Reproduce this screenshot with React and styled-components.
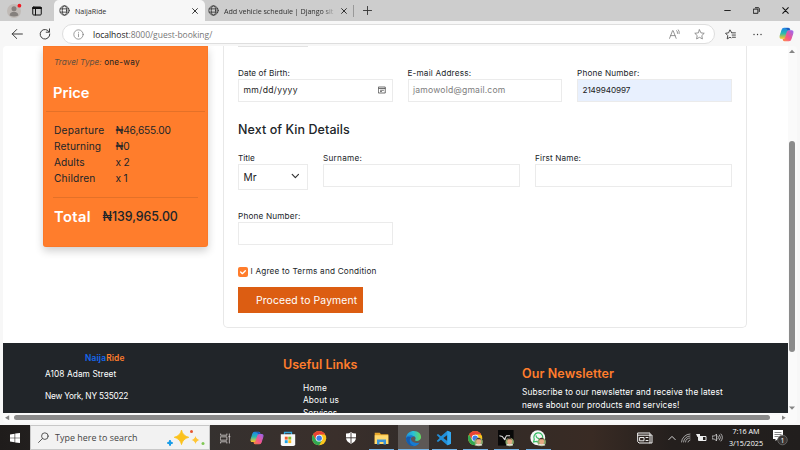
import React from "react";
import styled, { createGlobalStyle, css } from "styled-components";

const Global = createGlobalStyle`
  * { box-sizing: border-box; }
  body { margin: 0; background: #f7f7f7; }
  p, h2, h3, ul { margin: 0; padding: 0; font-weight: inherit; }
  svg { display: block; flex: none; }
`;

const siteFont = css`font-family: "Inter", "Noto Sans", sans-serif;`;
const systemFont = css`font-family: "Open Sans", "Noto Sans", sans-serif;`;

const Screen = styled.div`
  width: 800px;
  height: 450px;
  overflow: hidden;
  display: grid;
  grid-template-rows: 21px 25px 379px 25px;
  background: #f7f7f7;
  white-space: nowrap;
  ${systemFont}
`;

/* ---------- browser chrome ---------- */
const TabStrip = styled.div`
  display: flex;
  align-items: center;
  background: #cdcdcd;
`;
const ProfileArea = styled.div`
  width: 54px;
  height: 21px;
  display: flex;
  align-items: center;
  gap: 9px;
  padding-left: 6px;
`;
const Tab = styled.div`
  width: ${(p) => p.$width}px;
  height: 21px;
  padding: 0 ${(p) => p.$end}px 0 ${(p) => p.$start}px;
  display: flex;
  align-items: center;
  gap: 5px;
  border-radius: 5px 5px 0 0;
  background: ${(p) => (p.$active ? "#f7f7f7" : "transparent")};
  color: #303030;
  font-size: 7.2px;
`;
const TabTitle = styled.span`
  flex: 1;
  letter-spacing: ${(p) => p.$track || 0}px;
  mask-image: ${(p) => (p.$fade ? "linear-gradient(90deg, #000 88%, transparent)" : "none")};
`;
const TabDivider = styled.div`
  width: 1px;
  height: 12px;
  background: #999;
  margin-right: 9px;
`;
const WindowButtons = styled.div`
  margin-left: auto;
  display: flex;
  gap: 22px;
  padding-right: 11px;
`;
const Toolbar = styled.div`
  display: flex;
  align-items: center;
  padding: 1px 6px 0 11px;
`;
const NavIcons = styled.div`
  display: flex;
  gap: 16px;
  width: 51px;
`;
const AddressBar = styled.div`
  width: 653px;
  height: 20px;
  border: 1px solid #dedede;
  border-radius: 10px;
  background: #fff;
  display: flex;
  align-items: center;
  padding: 0 9px 0 10px;
  color: #777;
  font-size: 8.5px;
`;
const Url = styled.span`
  margin-left: 9px;
  flex: 1;
  letter-spacing: -0.02px;
  b { font-weight: 400; color: #202020; }
`;
const AddressIcons = styled.div`
  display: flex;
  align-items: center;
  gap: 14px;
`;
const ToolbarEnd = styled.div`
  margin-left: auto;
  display: flex;
  align-items: center;
  gap: 17px;
`;

/* ---------- viewport ---------- */
const Viewport = styled.div`
  width: 794px;
  height: 377px;
  margin-left: 3px;
  display: grid;
  grid-template: 366.5px 10.5px / 785px 9px;
  background: #fafafa;
  border-radius: 4px;
  overflow: hidden;
`;
const Page = styled.main`
  background: #fff;
  overflow: hidden;
  display: grid;
  grid-template-rows: 297px 69.5px;
  color: #212529;
  ${siteFont}
`;
const Booking = styled.div`
  display: flex;
  align-items: flex-start;
  padding-left: 40px;
  gap: 15px;
`;
const PriceCard = styled.aside`
  width: 165px;
  height: 200.5px;
  padding: 8px 3px 0;
  border-radius: 0 0 3px 3px;
  background: #ff7d2c;
  box-shadow: 0 4px 8px rgba(0, 0, 0, 0.19), inset 0 0 0 1px rgba(225, 92, 15, 0.12);
`;
const Text = styled.p`
  font-size: ${(p) => p.$size}px;
  line-height: ${(p) => p.$line || 12}px;
  letter-spacing: ${(p) => p.$track || 0}px;
  font-weight: ${(p) => p.$weight || 400};
  color: ${(p) => p.$color || "inherit"};
  padding-left: ${(p) => p.$indent || 0}px;
  margin-top: ${(p) => p.$above || 0}px;
`;
const TripLine = styled(Text)`
  color: #222;
  i { color: #65503f; letter-spacing: 0; }
`;
const Rule = styled.div`
  height: 1px;
  margin: ${(p) => p.$margin};
  background: #e47128;
`;
const PriceGrid = styled.div`
  display: grid;
  grid-template-columns: 61.5px 1fr;
  grid-auto-rows: 16.2px;
  align-items: center;
  padding-left: 8px;
  margin-top: 9.5px;
`;
const TotalRow = styled.div`
  display: flex;
  align-items: center;
  padding-left: 8px;
  margin-top: 10px;
  gap: 11.5px;
`;

const FormPanel = styled.section`
  width: 524px;
  height: 282px;
  padding: 0 14px;
  border: 1px solid #e8e8e8;
  border-top: 0;
  border-radius: 0 0 5px 5px;
`;
const PriorField = styled.div`
  width: 70px;
  height: 1px;
  background: #e3e3e3;
`;
const FieldRow = styled.div`
  display: grid;
  grid-template-columns: ${(p) => p.$columns};
  column-gap: 15px;
  align-items: start;
  margin-top: ${(p) => p.$above}px;
`;
const Label = styled.label`
  display: block;
  height: 12px;
  line-height: 12px;
  font-size: 8.2px;
  letter-spacing: ${(p) => p.$track ?? 0.17}px;
`;
const Box = styled.div`
  height: ${(p) => p.$height || 23.5}px;
  border: 1px solid #ebebeb;
  background: ${(p) => (p.$filled ? "#e8f0fe" : "#fff")};
  color: ${(p) => (p.$muted ? "#7d7d7d" : "#222")};
  display: flex;
  align-items: center;
  justify-content: space-between;
  padding: 0 6px 0 4.5px;
  font-size: ${(p) => p.$size || 8.6}px;
  letter-spacing: ${(p) => p.$track || 0}px;
`;
const Agreement = styled.div`
  display: flex;
  align-items: center;
  gap: 2.5px;
  height: 12px;
  margin-top: 20px;
`;
const Checkbox = styled.div`
  width: 10px;
  height: 10px;
  margin-top: 2px;
  border-radius: 2px;
  background: #ff7d2c;
  display: grid;
  place-items: center;
`;
const PayButton = styled.button`
  ${siteFont}
  display: block;
  width: 125px;
  height: 26px;
  margin-top: 10px;
  padding: 0 0 0 18px;
  border: 0;
  background: #dc5d12;
  color: #fff;
  font-size: 10.4px;
  letter-spacing: 0.11px;
  text-align: left;
`;

const Footer = styled.footer`
  background: #212529;
  color: #fff;
  display: grid;
  grid-template-columns: 238px 239px 1fr;
  padding-left: 42px;
  overflow: hidden;
`;
const Brand = styled(Text)`
  color: #ff7d2c;
  b { color: #1768ef; font-weight: inherit; }
`;

/* ---------- scrollbars ---------- */
const VerticalBar = styled.div`
  display: grid;
  grid-template-rows: 95px 210.5px 1fr;
  justify-items: center;
  padding: 0 2px 0 1px;
`;
const HorizontalBar = styled.div`
  display: grid;
  grid-template-columns: 11px 755.5px 1fr;
  align-items: center;
`;
const Thumb = styled.div`
  width: ${(p) => (p.$vertical ? "5.5px" : "100%")};
  height: ${(p) => (p.$vertical ? "100%" : "5px")};
  border-radius: 3px;
  background: #8b8b8b;
`;
const Arrow = styled.div`
  width: 6px;
  height: 5px;
  background: #858585;
  margin: ${(p) => p.$margin};
  align-self: ${(p) => p.$align || "center"};
  clip-path: ${(p) => p.$shape};
`;

/* ---------- taskbar ---------- */
const Taskbar = styled.div`
  display: flex;
  background: linear-gradient(90deg, #1f1c1b 0, #35312f 26%, #3a2f2b 42%, #302b29 55%, #392b24 74%, #241f1d 84%, #211e1d);
  color: #fff;
`;
const StartButton = styled.div`
  width: 30px;
  display: grid;
  place-items: center;
`;
const SearchBox = styled.div`
  width: 180px;
  border: 1px solid #c8c8c8;
  background: #f2f2f2;
  color: #444;
  display: flex;
  align-items: center;
  padding: 0 3px 0 7px;
  font-size: 8.9px;
`;
const SearchHint = styled.span`
  margin-left: 6px;
  flex: 1;
  letter-spacing: 0.04px;
`;
const AppSlot = styled.div`
  width: 31.25px;
  height: 25px;
  padding-top: 1px;
  display: grid;
  place-items: center;
  background: ${(p) => {
    const base = p.$active ? "#5d5856" : "transparent";
    if (!p.$open && !p.$active) return base;
    return `linear-gradient(#75b3e6, #75b3e6) center bottom / ${p.$active ? 31 : 25}px 1.5px no-repeat ${base}`;
  }};
`;
const Tray = styled.div`
  margin-left: auto;
  display: flex;
  align-items: center;
  padding-right: 12px;
`;
const TrayIcons = styled.div`
  display: flex;
  align-items: center;
  gap: 5px;
  margin-left: 15px;
`;
const Clock = styled.div`
  width: 46px;
  margin: 0 3px 0 0;
  text-align: center;
  font-size: 7.2px;
  line-height: 11.6px;
`;

const Line = ({ w = 10, h = 10, box = "0 0 20 20", color = "#333", stroke = 1.6, children }) => (
  <svg width={w} height={h} viewBox={box} fill="none" stroke={color} strokeWidth={stroke} strokeLinecap="round" strokeLinejoin="round">{children}</svg>
);
const Globe = () => (
  <Line w={11} h={11} stroke={1.5}>
    <circle cx="10" cy="10" r="8.5" /><ellipse cx="10" cy="10" rx="4" ry="8.5" /><path d="M2.4 7h15.2M2.4 13h15.2" />
  </Line>
);
const Close = ({ size = 6, color = "#222" }) => (
  <Line w={size} h={size} box="0 0 10 10" color={color} stroke={1.5}><path d="M1 1l8 8M9 1L1 9" /></Line>
);
const Profile = () => (
  <svg width="17" height="17" viewBox="0 0 17 17">
    <circle cx="8" cy="9" r="7" fill="#c0bab6" />
    <circle cx="8" cy="6.8" r="2.5" fill="#85807d" />
    <path d="M3.6 13.5c0-5 8.8-5 8.8 0q-4.4 2-8.8 0Z" fill="#85807d" />
    <circle cx="13.4" cy="3.7" r="1.9" fill="#f01822" />
  </svg>
);
const Copilot = ({ size = 14 }) => (
  <svg width={size} height={size} viewBox="0 0 24 24">
    <defs>
      <linearGradient id="cpA" x1="0" y1="0" x2="0" y2="1"><stop offset="0" stopColor="#1c86e8" /><stop offset=".5" stopColor="#29b8b0" /><stop offset="1" stopColor="#f0c52d" /></linearGradient>
      <linearGradient id="cpB" x1="1" y1="0" x2="0" y2="1"><stop offset="0" stopColor="#9b65ee" /><stop offset=".55" stopColor="#f4548d" /><stop offset="1" stopColor="#ff8345" /></linearGradient>
    </defs>
    <path d="M15 2H8Q5.800 2 5 4.500L2 14Q1 18 4 18h4q2 0 2.600-2L14 5.500Q14.700 4 17 4Q16.500 2 15 2Z" fill="url(#cpA)" stroke="url(#cpA)" strokeWidth="1.800" />
    <path d="M9 22h7q2.200 0 3-2.500L22 10Q23 6 20 6h-4q-2 0-2.600 2L10 18.500Q9.300 20 7 20q.5 2 2 2Z" fill="url(#cpB)" stroke="url(#cpB)" strokeWidth="1.800" />
    <path d="M9 1.500h6q2 0 2.500 3.500h-3.500q-1-2.500-5-3.500Z" fill="#2059bd" />
  </svg>
);
const Star = () => <Line w={11} h={11} color="#777" stroke={1.4}><path d="M10 1.500l2.600 5.500 6 .8-4.400 4.200 1.100 6L10 15.100 4.700 18l1.100-6L1.400 7.800l6-.8Z" /></Line>;
const Face = () => (
  <g><circle cx="16.500" cy="17" r="6" fill="#8cab6c" /><path d="M11.500 22q0-3 5-3t5 3Z" fill="#e8dfdd" /><ellipse cx="16.500" cy="16" rx="3.400" ry="4.200" fill="#e6a983" /><path d="M13 15c0-6 7-5 7 0l-1-2h-5Z" fill="#44312c" /></g>
);
const ChromeIcon = ({ face }) => (
  <svg width="17" height="17" viewBox="0 0 24 24">
    <circle cx="11.500" cy="11.500" r="10" fill="#fbc51d" />
    <path d="M2.800 6.500A10 10 0 0 1 20.200 6.500H11.500L7.200 14Z" fill="#e94335" />
    <path d="M2.800 6.500A10 10 0 0 0 11.500 21.500L15.800 14H7.200Z" fill="#31a853" />
    <circle cx="11.500" cy="11.500" r="4.900" fill="#fff" /><circle cx="11.500" cy="11.500" r="3.800" fill="#3d7de8" />
    {face && <Face />}
  </svg>
);
const StoreIcon = () => (
  <svg width="16" height="17" viewBox="0 0 16 17">
    <path d="M4.500 5V2.500h7V5" fill="none" stroke="#35a7df" strokeWidth="1.300" />
    <path d="M.8 4.200h14.400v10q0 1.800-1.800 1.800H2.600Q.8 16 .8 14.200Z" fill="#f8f8f8" />
    <path d="M4.800 6.700h2.900v2.900H4.800Z" fill="#ef5b2b" /><path d="M8.300 6.700h2.900v2.900H8.300Z" fill="#80bd2b" />
    <path d="M4.800 10.200h2.900v2.900H4.800Z" fill="#20a5e8" /><path d="M8.300 10.200h2.900v2.900H8.300Z" fill="#fdbb20" />
  </svg>
);
const ShieldIcon = () => (
  <svg width="12" height="12" viewBox="0 0 12 12"><path d="M6 .2q2 1.400 5 1.300v4Q11 9.700 6 11.800 1 9.700 1 5.500v-4Q4 1.600 6 .2Z" fill="#fff" /><path d="M6 1v10M1 5.800h10" stroke="#3b3230" strokeWidth=".9" /></svg>
);
const FolderIcon = () => (
  <svg width="15" height="13" viewBox="0 0 15 13"><path d="M.7.700h5l1.300 1.500h7.300V12H.7Z" fill="#e8a72b" /><path d="M.7 3.200h13.600V12H.7Z" fill="#ffda70" /><path d="M3 12.500V7.500h9v5H9.500V10h-4v2.500Z" fill="#3d95d9" /></svg>
);
const EdgeIcon = () => (
  <svg width="17" height="17" viewBox="0 0 24 24">
    <defs><linearGradient id="edgeTop"><stop stopColor="#1d91dc" /><stop offset=".5" stopColor="#2bc3d2" /><stop offset="1" stopColor="#68d95a" /></linearGradient></defs>
    <path d="M1.500 11C2.500 4.500 7 1.500 12.200 1.500c7 0 11 4.700 10.500 9.500-.5 4-6.600 5.500-8.700 3.500 2-2.300 1-6-3-6C7 8.500 3.500 8.500 1.500 11Z" fill="url(#edgeTop)" />
    <path d="M1.500 11c1.500-4.500 9.500-5 12-1-5-1.500-6.500 3-3.500 6 2.800 2.900 7.300 2.800 10.500 1.500C17.500 23 11.500 24 7.500 21.500 3 19 1 15.500 1.500 11Z" fill="#167bd1" />
    <path d="M8.500 10.500C5 14 6.500 21 13 22.300 6.500 23.500 1.500 18 1.500 11.500q3-3.500 7-1Z" fill="#155cae" />
  </svg>
);
const CodeIcon = () => (
  <svg width="16" height="16" viewBox="0 0 24 24"><path fillRule="evenodd" d="M17 1l5.500 2.500v17L17 23 7.500 14.500 3 18 1 16.500 5.500 12 1 7.500 3 6l4.500 3.500Zm0 6.500L11 12l6 4.500Z" fill="#218ed8" /><path d="M17 1l5.500 2.500v17L17 23Z" fill="#35a8ef" /></svg>
);
const BlackApp = () => (
  <svg width="17" height="17" viewBox="0 0 24 24"><path d="M0 0h22v22H0Z" fill="#080808" /><path d="M2 8l4 1 3 4 3-5h5M9 14l2-2" stroke="#ddd" strokeWidth="1.500" fill="none" /><Face /></svg>
);
const WhatsApp = () => (
  <svg width="17" height="17" viewBox="0 0 24 24"><circle cx="11" cy="11" r="10.500" fill="#f6f6f6" /><path d="M5 17l1-4a6.300 6.300 0 1 1 3 3Z" fill="none" stroke="#34bd64" strokeWidth="1.700" /><path d="M8.500 7.500q0 4 5 5" stroke="#34bd64" strokeWidth="1.500" fill="none" /><Face /></svg>
);
const TaskViewIcon = () => (
  <Line w={11} h={11} box="0 0 12 12" color="#d4d0ce" stroke={0.9}><path d="M.7 1v1.400h6.800V1M.7 11V9.600h6.800V11M.7 4.200h6.800v3.600H.7ZM10.200 1v10M9.500 4h1.400" /></Line>
);
const Sparkles = () => (
  <svg width="40" height="18" viewBox="0 0 40 18">
    <path d="M15.500 1q1.200 5.800 7.300 7.300-6 1.500-7.300 7.300-1.300-5.800-7.300-7.300Q14.300 6.800 15.500 1Z" fill="#fbc21c" stroke="#fbc21c" strokeWidth=".8" strokeLinejoin="round" />
    <path d="M29.500 7q.7 3.200 4 4-3.300.8-4 4-.7-3.200-4-4 3.300-.8 4-4Z" fill="#ffc533" />
    <path d="M4 11l.8 2 2 1-2 .8-.8 2-.8-2-2-.8 2-1Z" fill="#149be8" stroke="#149be8" />
    <circle cx="25.500" cy="2.500" r="1.500" fill="#e65530" /><circle cx="37" cy="14.500" r="1.500" fill="#80c855" />
  </svg>
);
const NewsIcon = () => (
  <Line w={16} h={12} box="0 0 16 12" color="#eee" stroke={1}><path d="M1 1h12v10H2L1 10ZM13 3h2v8h-2M1 3.200h12M3 5.500h4v3.300H3ZM9 5.500h2M9 8.500h2" /></Line>
);

const columns3 = "154.5px 154.5px 154.5px";

export default function App() {
  return (
    <Screen>
      <Global />
      <TabStrip>
        <ProfileArea>
          <Profile />
          <Line w={10} h={10} color="#111" stroke={2}><rect x="1.500" y="2" width="17" height="16" rx="2" /><path d="M2 4h16" strokeWidth="4" /><path d="M7 5v13" /></Line>
        </ProfileArea>
        <Tab $active $width={151} $start={5} $end={7}>
          <Globe /><TabTitle $track={-0.04}>NaijaRide</TabTitle><Close />
        </Tab>
        <Tab $width={148} $start={3} $end={6}>
          <Globe /><TabTitle $fade $track={-0.06}>Add vehicle schedule | Django sit</TabTitle><Close />
        </Tab>
        <TabDivider />
        <Line w={9} h={9} stroke={2}><path d="M10 1v18M1 10h18" /></Line>
        <WindowButtons>
          <Line w={7} h={7} box="0 0 10 10" color="#111" stroke={1.3}><path d="M1 5h8" /></Line>
          <Line w={7} h={7} box="0 0 10 10" color="#111" stroke={1.3}><path d="M1 3h6v6H1ZM3.500 1h4q1.500 0 1.500 1.500v4" /></Line>
          <Close size={7} color="#111" />
        </WindowButtons>
      </TabStrip>

      <Toolbar>
        <NavIcons>
          <Line w={12} h={12} stroke={1.6}><path d="M19 10H2M9.500 2.500L2 10l7.500 7.500" /></Line>
          <Line w={12} h={12} stroke={1.6}><path d="M17 6.500A8 8 0 1 0 18 10M17.500 1.500v5.500H12" /></Line>
        </NavIcons>
        <AddressBar>
          <Line w={11} h={11} color="#777" stroke={1.3}><circle cx="10" cy="10" r="8.500" /><path d="M10 9v5M10 6v.2" /></Line>
          <Url><b>localhost</b>:8000/guest-booking/</Url>
          <AddressIcons>
            <Line w={11} h={11} color="#777" stroke={1.4}><path d="M1 17L6.500 3h1L13 17M3 12h8M14 3q2 2 1.500 5M17 1.500q2.500 3 1.500 7" /></Line>
            <Star />
          </AddressIcons>
        </AddressBar>
        <ToolbarEnd>
          <Line w={11} h={11} stroke={1.6}><path d="M12 6.500L9 1.500 6.500 7l-5.500.7L5 12l-1 6L9 15l2 1M12.500 7H19M13 11H19M13.500 15h5.500" /></Line>
          <Line w={9} h={9} box="0 0 18 18" stroke={2.6}><path d="M2 9h.1M9 9h.1M16 9h.1" /></Line>
          <Copilot size={15} />
        </ToolbarEnd>
      </Toolbar>

      <Viewport>
        <Page>
          <Booking>
            <PriceCard>
              <TripLine $size={8.2} $indent={8} $line={16} $track={0.22}><i>Travel Type:</i> one-way</TripLine>
              <Text as="h2" $size={14.7} $weight={600} $color="#fff" $indent={7} $line={20} $above={13}>Price</Text>
              <Rule $margin="8px 0 0" />
              <PriceGrid>
                <Text $size={10.2} $track={0.22}>Departure</Text><Text $size={10.2} $track={-0.17}>₦46,655.00</Text>
                <Text $size={10.2} $track={0.08}>Returning</Text><Text $size={10.2} $track={-0.1}>₦0</Text>
                <Text $size={10.2}>Adults</Text><Text $size={10.2} $track={-0.2}>x 2</Text>
                <Text $size={10.2} $track={0.15}>Children</Text><Text $size={10.2} $track={-0.2}>x 1</Text>
              </PriceGrid>
              <Rule $margin="11px 7px 0" />
              <TotalRow>
                <Text $size={14.7} $line={18} $weight={600} $color="#fff" $track={0.4}>Total</Text>
                <Text $size={12.4} $line={18} $weight={500} $track={-0.06}>₦139,965.00</Text>
              </TotalRow>
            </PriceCard>

            <FormPanel>
              <PriorField />
              <FieldRow $columns={columns3} $above={19.5}>
                <div><Label $track={0.07}>Date of Birth:</Label>
                  <Box $track={0.33}>mm/dd/yyyy
                    <Line w={8} h={8} box="0 0 16 16" color="#333" stroke={1.4}><path d="M1.500 2h13v12h-13ZM2 5h12M5 8.500h6M5 11h2" /></Line>
                  </Box></div>
                <div><Label>E-mail Address:</Label><Box $muted $track={0.2}>jamowold@gmail.com</Box></div>
                <div><Label>Phone Number:</Label><Box $filled $size={8.2} $track={-0.1}>2149940997</Box></div>
              </FieldRow>
              <Text as="h3" $size={12.5} $weight={500} $line={16} $above={19.5} $track={0.07}>Next of Kin Details</Text>
              <FieldRow $columns="70px 197px 197px" $above={14}>
                <div><Label $track={0}>Title</Label>
                  <Box $height={26.500} $size={10.2}>Mr
                    <Line w={12} h={7} box="0 0 16 10" color="#333" stroke={1.7}><path d="M4 2l4.500 4.500 4.500-4.500" /></Line>
                  </Box></div>
                <div><Label $track={0.25}>Surname:</Label><Box /></div>
                <div><Label>First Name:</Label><Box /></div>
              </FieldRow>
              <FieldRow $columns={columns3} $above={19.5}>
                <div><Label>Phone Number:</Label><Box /></div>
              </FieldRow>
              <Agreement>
                <Checkbox><Line w={8} h={8} box="0 0 12 12" color="#fff" stroke={2}><path d="M2.500 6L5 8.500 9.500 4" /></Line></Checkbox>
                <Label $track={0.2}>I Agree to Terms and Condition</Label>
              </Agreement>
              <PayButton>Proceed to Payment</PayButton>
            </FormPanel>
          </Booking>

          <Footer>
            <div>
              <Brand $size={8.4} $weight={600} $indent={40} $above={9} $track={0.15}><b>Naija</b>Ride</Brand>
              <Text $size={8.3} $above={4} $track={0.08}>A108 Adam Street</Text>
              <Text $size={8.3} $above={10} $track={-0.22}>New York, NY 535022</Text>
            </div>
            <div>
              <Text as="h3" $size={12.5} $weight={600} $color="#ff7d2c" $line={16} $above={13.5}>Useful Links</Text>
              <Text $size={8.3} $indent={20} $above={9.5} $track={0.2}>Home</Text>
              <Text $size={8.3} $indent={20} $track={0.12}>About us</Text>
              <Text $size={8.3} $indent={20} $above={0.5}>Services</Text>
            </div>
            <div>
              <Text as="h3" $size={12.5} $weight={600} $color="#ff7d2c" $line={16} $above={23} $track={0.1}>Our Newsletter</Text>
              <Text $size={8.3} $above={4} $track={0.13}>Subscribe to our newsletter and receive the latest</Text>
              <Text $size={8.3} $above={0.5} $track={0.13}>news about our products and services!</Text>
            </div>
          </Footer>
        </Page>
        <VerticalBar>
          <Arrow $align="start" $margin="3px 0 0" $shape="polygon(50% 15%, 100% 80%, 0 80%)" />
          <Thumb $vertical />
          <Arrow $align="end" $margin="0 0 2px" $shape="polygon(0 20%, 100% 20%, 50% 85%)" />
        </VerticalBar>
        <HorizontalBar>
          <Arrow $margin="0 0 0 2px" $shape="polygon(0 50%, 70% 0, 70% 100%)" />
          <Thumb />
          <Arrow $margin="0 0 0 12px" $shape="polygon(0 0, 70% 50%, 0 100%)" />
        </HorizontalBar>
      </Viewport>

      <Taskbar>
        <StartButton>
          <svg width="10" height="10" viewBox="0 0 10 10"><path d="M0 1.400l4.600-.7v4H0ZM5.200.600L10 0v4.700H5.200ZM0 5.300h4.600v4L0 8.600ZM5.200 5.300H10V10l-4.800-.6Z" fill="#fff" /></svg>
        </StartButton>
        <SearchBox>
          <Line w={11} h={11} color="#444" stroke={1.600}><circle cx="12.500" cy="7.500" r="6" /><path d="M8 12l-7 7" /></Line>
          <SearchHint>Type here to search</SearchHint>
          <Sparkles />
        </SearchBox>
        <AppSlot><TaskViewIcon /></AppSlot>
        <AppSlot><Copilot size={14} /></AppSlot>
        <AppSlot><StoreIcon /></AppSlot>
        <AppSlot><ChromeIcon /></AppSlot>
        <AppSlot><ShieldIcon /></AppSlot>
        <AppSlot $open><FolderIcon /></AppSlot>
        <AppSlot $active><EdgeIcon /></AppSlot>
        <AppSlot $open><CodeIcon /></AppSlot>
        <AppSlot $open><ChromeIcon face /></AppSlot>
        <AppSlot $open><BlackApp /></AppSlot>
        <AppSlot $open><WhatsApp /></AppSlot>
        <Tray>
          <NewsIcon />
          <TrayIcons>
            <Line w={8} h={8} box="0 0 10 10" color="#eee" stroke={1.1}><path d="M1 7l4-4 4 4" /></Line>
            <Line w={10} h={10} color="#ccc" stroke={1.5}><path d="M1 18A17 17 0 0 1 18 2M5 18A13 13 0 0 1 18 6M9 18a9 9 0 0 1 9-8M14 18a5 5 0 0 1 4-4" /></Line>
            <svg width="11" height="8" viewBox="0 0 11 8"><path d="M2.500 2.500h7.500v4H2.500Z" fill="none" stroke="#eee" /><path d="M3 3h4v3H3ZM0 0h4v3H1.500Z" fill="#eee" /></svg>
            <Line w={11} h={9} box="0 0 22 18" color="#ddd" stroke={1.5}><path d="M1 6h4l4-4v14l-4-4H1ZM12 6q2 3 0 6M15 4q4 5 0 10M18 2q6 7 0 14" /></Line>
          </TrayIcons>
          <Clock>7:16 AM<br />3/15/2025</Clock>
          <svg width="16" height="17" viewBox="0 0 16 17">
            <path d="M1 1h10v9H6l-2.500 2V10H1Z" fill="#fff" /><path d="M2.500 3.500h7M2.500 5.500h7M2.500 7.500h4" stroke="#666" strokeWidth=".8" />
            <circle cx="10.500" cy="11" r="4.800" fill="#393533" stroke="#777" strokeWidth=".7" />
            <text x="10.500" y="13.500" fontFamily="Open Sans" fontSize="7" fill="#fff" textAnchor="middle">1</text>
          </svg>
        </Tray>
      </Taskbar>
    </Screen>
  );
}
